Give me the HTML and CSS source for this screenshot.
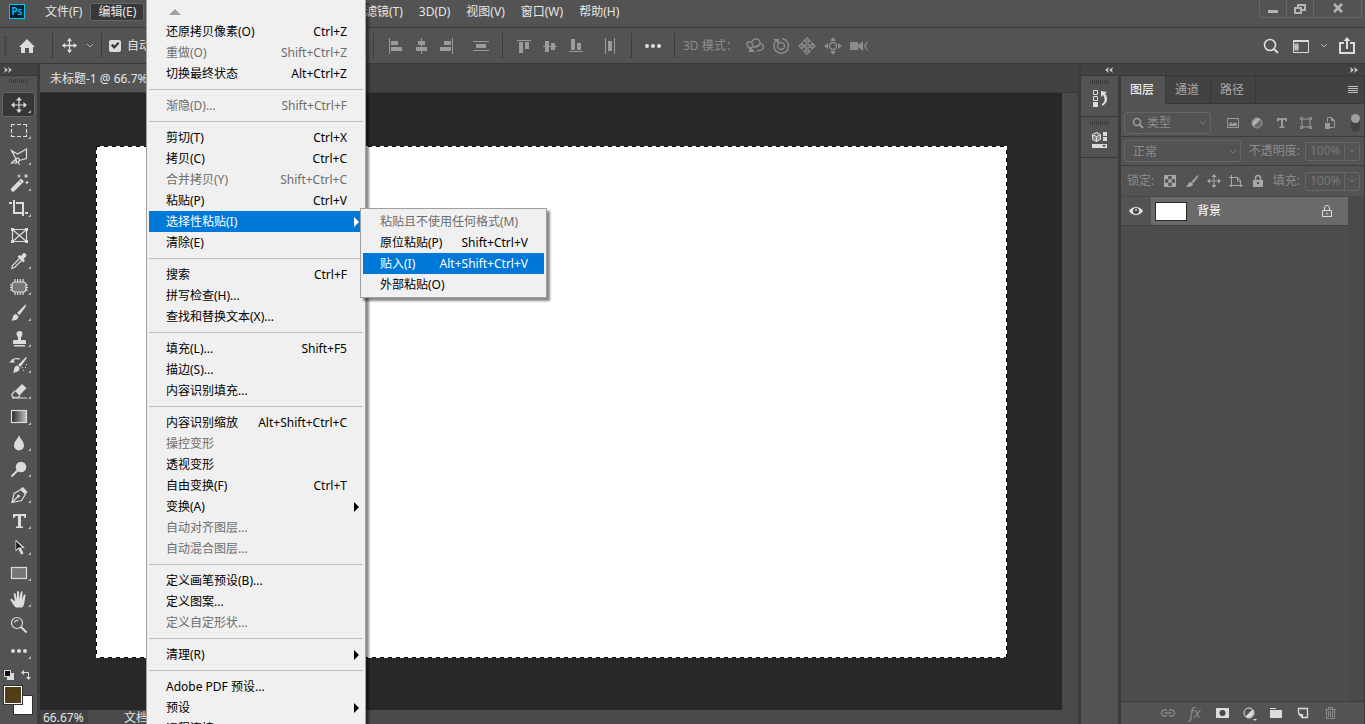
FILE: index.html
```html
<!DOCTYPE html>
<html lang="zh-CN">
<head>
    <meta charset="UTF-8">
    <meta name="viewport" content="width=device-width, initial-scale=1.0">
    <title>未标题-1 @ 66.7%</title>
    <link rel="stylesheet" href="styles.css">
</head>
<body>

    <header class="menubar">
        <div class="logo">Ps</div>
        <nav class="menus">
            <button>文件(F)</button>
            <button class="open">编辑(E)</button>
            <button>图像(I)</button>
            <button>图层(L)</button>
            <button>文字(Y)</button>
            <button>选择(S)</button>
            <button>滤镜(T)</button>
            <button>3D(D)</button>
            <button>视图(V)</button>
            <button>窗口(W)</button>
            <button>帮助(H)</button>
        </nav>
        <div class="window-buttons">
            <button aria-label="最小化"><svg width="12" height="12" viewBox="0 0 12 12"><path d="M1 7h10v3H1z" fill="#b4b4b4"/></svg></button>
            <button aria-label="还原"><svg width="14" height="12" viewBox="0 0 14 12" fill="none" stroke="#b4b4b4" stroke-width="2"><path d="M5 4V2h7v5H9"/><path d="M2 5h6v5H2z"/></svg></button>
            <button class="close" aria-label="关闭"><svg width="12" height="12" viewBox="0 0 12 12" stroke="#b4b4b4" stroke-width="2.500"><path d="M2 1l8 8M10 1L2 9"/></svg></button>
        </div>
    </header>

    <div class="options">
        <div class="options-start">
            <span class="grip-v"></span>
            <button class="home" aria-label="主页"><svg width="18" height="16" viewBox="0 0 18 16" fill="#dcdcdc"><path d="M9 1L1 9h2v6h4v-5h4v5h4V9h2z"/></svg></button>
            <span class="divider"></span>
            <button class="current-tool" aria-label="移动工具">
                <svg width="17" height="17" viewBox="0 0 20 20" stroke="#dcdcdc" stroke-width="1.500" fill="#dcdcdc"><path d="M10 3v14M3 10h14"/><path d="M10 1L7 5h6zM10 19l-3-4h6zM1 10l4-3v6zM19 10l-4-3v6z" stroke="none"/></svg>
                <svg width="8" height="6" viewBox="0 0 8 6" fill="none" stroke="#b0b0b0"><path d="M1 1l3 3 3-3"/></svg>
            </button>
            <span class="divider"></span>
            <input type="checkbox" id="autoSelect" checked>
            <label for="autoSelect">自动选择：</label>
        </div>
        <span class="divider"></span>
        <div class="group">
            <button aria-label="左对齐"><svg width="20" height="20" viewBox="0 0 20 20" fill="#9b9b9b"><path d="M4 2h1v16H4zM6 5h7v4H6zM6 11h11v4H6z"/></svg></button>
            <button aria-label="水平居中对齐"><svg width="20" height="20" viewBox="0 0 20 20" fill="#9b9b9b"><path d="M10 2h1v16h-1zM7 5h7v4H7zM5 11h11v4H5z"/></svg></button>
            <button aria-label="右对齐"><svg width="20" height="20" viewBox="0 0 20 20" fill="#9b9b9b"><path d="M15 2h1v16h-1zM7 5h7v4H7zM3 11h11v4H3z"/></svg></button>
        </div>
        <div class="group">
            <button aria-label="垂直分布"><svg width="20" height="20" viewBox="0 0 20 20" fill="#9b9b9b"><path d="M2 5h16v1H2zM5 8h10v4H5zM2 14h16v1H2z"/></svg></button>
        </div>
        <span class="divider"></span>
        <div class="group">
            <button aria-label="顶对齐"><svg width="20" height="20" viewBox="0 0 20 20" fill="#9b9b9b"><path d="M3 4h14v1H3zM5 6h4v11H5zM11 6h4v7h-4z"/></svg></button>
            <button aria-label="垂直居中对齐"><svg width="20" height="20" viewBox="0 0 20 20" fill="#9b9b9b"><path d="M3 10h14v1H3zM5 5h4v11H5zM11 7h4v7h-4z"/></svg></button>
            <button aria-label="底对齐"><svg width="20" height="20" viewBox="0 0 20 20" fill="#9b9b9b"><path d="M3 15h14v1H3zM5 3h4v11H5zM11 7h4v7h-4z"/></svg></button>
        </div>
        <div class="group">
            <button aria-label="水平分布"><svg width="20" height="20" viewBox="0 0 20 20" fill="#9b9b9b"><path d="M5 2h1v16H5zM8 5h4v10H8zM14 2h1v16h-1z"/></svg></button>
        </div>
        <span class="divider"></span>
        <div class="group">
            <button aria-label="更多"><svg width="20" height="20" viewBox="0 0 20 20" fill="#e0e0e0"><circle cx="4" cy="10" r="2"/><circle cx="10" cy="10" r="2"/><circle cx="16" cy="10" r="2"/></svg></button>
        </div>
        <span class="divider"></span>
        <div class="group">
            <span class="mode-label">3D 模式：</span>
            <button aria-label="环绕"><svg width="20" height="20" viewBox="0 0 20 20" fill="none" stroke="#8c8c8c" stroke-width="1.400"><circle cx="11" cy="7" r="4"/><path d="M7 6C3 5 1 7 2 9c1 3 4 4 6 5M5 11c3 2 6-1 9-2M15 7c5 3 5 7-3 8"/><path d="M3 16h7l-4-4z" fill="#8c8c8c" stroke="none"/></svg></button>
            <button aria-label="滚动"><svg width="20" height="20" viewBox="0 0 20 20" fill="none" stroke="#8c8c8c" stroke-width="1.400"><circle cx="10" cy="10" r="3.500"/><path d="M6 4a7.300 7.300 0 1 0 5-1.300"/><path d="M2 3h6v5z" fill="#8c8c8c" stroke="none"/></svg></button>
            <button aria-label="拖动"><svg width="20" height="20" viewBox="0 0 20 20" fill="none" stroke="#8c8c8c" stroke-width="1.300"><path d="M10 2L7 5h2v4H5V7l-3 3 3 3v-2h4v4H7l3 3 3-3h-2v-4h4v2l3-3-3-3v2h-4V5h2z"/></svg></button>
            <button aria-label="滑动"><svg width="20" height="20" viewBox="0 0 20 20" fill="none" stroke="#8c8c8c" stroke-width="1.400"><circle cx="10" cy="10" r="3.500"/><path d="M10 1L7 5h6zM10 19l-3-4h6zM1 10l4-3v6zM19 10l-4-3v6z" fill="#8c8c8c" stroke="none"/></svg></button>
            <button aria-label="缩放"><svg width="20" height="20" viewBox="0 0 20 20" fill="#8c8c8c"><path d="M1 6h8v8H1zM9 9l5-4v10l-5-4z"/><path d="M19 5l-4 5 4 5M17 7v6" fill="none" stroke="#8c8c8c"/></svg></button>
        </div>
        <div class="options-end">
            <button aria-label="搜索"><svg width="18" height="18" viewBox="0 0 18 18" fill="none" stroke="#dcdcdc" stroke-width="1.600"><circle cx="8" cy="8" r="5.500"/><path d="M12 12l4 4" stroke-width="2"/></svg></button>
            <button aria-label="工作区"><svg width="18" height="18" viewBox="0 0 18 18" fill="none" stroke="#dcdcdc"><path d="M1.500 3.500h15v12h-15z"/><path d="M1 4.500h16"/><path d="M3 7h3v2H3zM3 9h3v2H3zM3 11h3v2H3z"/></svg></button>
            <button class="small" aria-label="选择工作区"><svg width="8" height="6" viewBox="0 0 8 6" fill="none" stroke="#b0b0b0"><path d="M1 1l3 3 3-3"/></svg></button>
            <button aria-label="共享"><svg width="18" height="18" viewBox="0 0 18 18" fill="none" stroke="#dcdcdc" stroke-width="2"><path d="M6 6H2v10h14V6h-4"/><path d="M9 12V3"/><path d="M9 0L5.500 4h7z" fill="#dcdcdc" stroke="none"/></svg></button>
        </div>
    </div>

    <main class="app">
        <aside class="toolbar">
            <div class="strip"><svg width="8" height="6" viewBox="0 0 8 6" fill="#c8c8c8"><path d="M0 0l4 3-4 3 1-3zM4 0l4 3-4 3 1-3z"/></svg></div>
            <span class="grip-h"></span>
            <div class="tools">
                <button class="tool active more" aria-label="移动"><svg viewBox="0 0 20 20"><path class="s" d="M10 4v12M4 10h12"/><path d="M10 2L7 5.500h6zM10 18l-3-3.500h6zM2 10l3.500-3v6zM18 10l-3.500-3v6z"/></svg></button>
                <button class="tool more" aria-label="选框"><svg viewBox="0 0 20 20"><path class="s" d="M2.500 6V3.500H6M8 3.500h4M14 3.500h3.500V6M17.500 8v4M17.500 13.500v2H14M12 15.500H8M6 15.500H2.500v-2M2.500 12V8"/></svg></button>
                <button class="tool more" aria-label="套索"><svg viewBox="0 0 20 20"><path class="s" d="M7 12L2.500 3.500l6 3.500 9-5v9.500L10 13.500M7 12l-4.500 4h5z"/><circle class="s" cx="8.500" cy="13" r="1.800"/><path class="s" d="M9 15l1.500 3"/></svg></button>
                <button class="tool more" aria-label="魔棒"><svg viewBox="0 0 20 20"><path d="M12 5.500l3 3L5.500 18a2.100 2.100 0 0 1-3-3z"/><path d="M10.500 8l1.800 1.500" stroke="#535353"/><path d="M10 1.500v3M8.500 3h3M17 1v4M15 3h4M18 8v3M16.500 9.500h3" class="s"/></svg></button>
                <button class="tool more" aria-label="裁剪"><svg viewBox="0 0 20 20"><path class="s w" d="M0 4h3M5 1v13h8M7 4h7v13M16 14h3"/></svg></button>
                <button class="tool" aria-label="图框"><svg viewBox="0 0 20 20"><path class="s" d="M3.500 4.500h14v12h-14zM3.500 4.500l14 12M17.500 4.500l-14 12"/><path d="M2 3h3v3H2zM16 3h3v3h-3zM2 15h3v3H2zM16 15h3v3h-3z"/></svg></button>
                <button class="tool more" aria-label="吸管"><svg viewBox="0 0 20 20"><path d="M8.500 5.500l2-1.500 1.500 1 2-2.500c1.500-1.500 4.500 1 3 3L14.500 8l1.500 1.500-1.800 2z"/><path class="s" d="M11 7l-7.500 7.500-.8 2.800 2.800-.8L13 9"/></svg></button>
                <button class="tool more" aria-label="修补"><svg viewBox="0 0 20 20"><rect x="3" y="5" width="14" height="10" rx="3" fill="#777" class="s"/><path class="s" d="M6 2v3M8.700 2v3M11.300 2v3M14 2v3M6 15v3M8.700 15v3M11.300 15v3M14 15v3M1 8h2M1 10.500h2M1 13h2M17 8h2M17 10.500h2M17 13h2"/></svg></button>
                <button class="tool more" aria-label="画笔"><svg viewBox="0 0 20 20"><path d="M16.500 1.500c1 0 .8 1-.2 2.700L10.500 12 8 10zM7 11l2.500 2.200c0 3-3 4.500-7.500 4.300 1.800-1 1.500-2.500 2-4 .5-1.600 1.700-2.300 3-2.500z"/></svg></button>
                <button class="tool more" aria-label="仿制图章"><svg viewBox="0 0 20 20"><path d="M10.500 2a3 3 0 0 1 3 3c0 1.600-1.500 2.500-1.500 4v2h4c1 0 1 1 1 3v1H4v-1c0-2 0-3 1-3h4V9c0-1.500-1.500-2.400-1.500-4a3 3 0 0 1 3-3zM5 16h11v1.500H5z"/></svg></button>
                <button class="tool more" aria-label="历史记录画笔"><svg viewBox="0 0 20 20"><path d="M17 2c1 0 .8 1-.2 2.500L11.500 12 9 10zM8.200 10.500l2.500 2.200c0 3-2.500 5-7 4.800 1.500-1 1-2.500 1.500-4 .5-1.700 1.700-2.700 3-3zM0 7.500L4 4l2 3.500z"/><path class="s" d="M3 5c3-2.500 6-1 8-1"/><path d="M17 9h1v1h-1zM16 12h1v1h-1zM14 15h1v1h-1zM13 12h1v1h-1z"/></svg></button>
                <button class="tool more" aria-label="橡皮擦"><svg viewBox="0 0 20 20"><path d="M13 3l4.500 4-7 7.500L6 10z"/><path class="s" d="M6 10l-3 3c-.8 1 .5 2.500 1.500 3.500H9l2-2M3 17h15"/></svg></button>
                <button class="tool more" aria-label="渐变"><svg viewBox="0 0 20 20"><defs><linearGradient id="grad"><stop offset="0" stop-color="#282828"/><stop offset="1" stop-color="#c4c4c4"/></linearGradient></defs><rect x="2.500" y="3.500" width="15" height="12" fill="url(#grad)" class="s"/></svg></button>
                <button class="tool more" aria-label="模糊"><svg viewBox="0 0 20 20"><path d="M10 2c1 4 5 6 5 10.500a5 5 0 0 1-10 0C5 8 9 6 10 2z"/></svg></button>
                <button class="tool more" aria-label="减淡"><svg viewBox="0 0 20 20"><circle cx="12" cy="8" r="5.300"/><path d="M9 11l-6.500 6.500" class="s w"/></svg></button>
                <button class="tool more" aria-label="钢笔"><svg viewBox="0 0 20 20"><path class="s" d="M3 17.500l2-9 7-4 4.500 4.500-4 6.500zM3 17.500l6-6"/><circle cx="9.500" cy="11" r="1.500"/><path d="M11.500 3.500L14 2l4.500 5-2 2.500z"/></svg></button>
                <button class="tool more" aria-label="文字"><svg viewBox="0 0 20 20"><path d="M4 3h13v4h-1.500c-.2-1.500-.7-2-2.500-2h-1v10.500h2V17H7v-1.500h2V5H8c-1.800 0-2.300.5-2.500 2H4z"/></svg></button>
                <button class="tool more" aria-label="路径选择"><svg viewBox="0 0 20 20"><path d="M6.500 2.500v12l3-2.500 2.500 5.500 2.500-1L12 11h4z"/><path d="M7.200 4.500v8l2.500-2h3.500z" fill="#111"/></svg></button>
                <button class="tool more" aria-label="矩形"><svg viewBox="0 0 20 20"><rect x="2.500" y="4.500" width="15" height="11" fill="#757575" class="s"/></svg></button>
                <button class="tool more" aria-label="抓手"><svg viewBox="0 0 20 20"><path d="M7 18.500c-2-1-4-5-5.500-7.500-.3-1.300 1-1.500 2-.6L6 12.500 4.700 5c0-1.200 1.500-1.400 1.900 0l1.200 5.300L8 3c.1-1.300 1.900-1.300 2 0l.3 7.200L11.700 3c.3-1.200 1.900-1 1.800.3L13 10.700l1.800-4.800c.5-1 1.900-.6 1.700.6L15.300 14c-.4 2.600-1 3.500-2.300 4.500z"/></svg></button>
                <button class="tool" aria-label="缩放"><svg viewBox="0 0 20 20"><circle class="s" cx="8" cy="8" r="5.500"/><path class="s" d="M5.500 7.500a3 3 0 0 1 4-2"/><path class="s w" d="M12 12l5.500 5.500"/></svg></button>
                <button class="tool more" aria-label="编辑工具栏"><svg viewBox="0 0 20 20"><circle cx="4" cy="10" r="2"/><circle cx="10" cy="10" r="2"/><circle cx="16" cy="10" r="2"/></svg></button>
            </div>
            <div class="color-buttons">
                <button aria-label="默认颜色"><svg width="12" height="12" viewBox="0 0 12 12"><path d="M4 4h7v7H4z" fill="#dcdcdc"/><path d="M1.500 1.500h6v6h-6z" fill="#111" stroke="#dcdcdc"/></svg></button>
                <button aria-label="切换颜色"><svg width="12" height="12" viewBox="0 0 12 12" fill="#dcdcdc"><path d="M3 3.500h5.500V9" fill="none" stroke="#dcdcdc"/><path d="M1 3.500L4 1v5zM8.500 11L6 8h5z"/></svg></button>
            </div>
            <div class="swatches">
                <button class="swatch back" aria-label="背景色"></button>
                <button class="swatch front" aria-label="前景色"></button>
            </div>
        </aside>

        <section class="document">
            <div class="tabs"><button class="doc-tab">未标题-1 @ 66.7%</button></div>
            <div class="workspace">
                <div class="canvas"><div class="page"></div></div>
                <div class="scrollbar"></div>
            </div>
            <div class="status">
                <span class="zoom-level">66.67%</span>
                <span class="doc-info">文档</span>
            </div>
        </section>

        <div class="side">
            <div class="strip side-strip">
                <svg width="8" height="6" viewBox="0 0 8 6" fill="#c8c8c8"><path d="M4 0L0 3l4 3-1-3zM8 0L4 3l4 3-1-3z"/></svg>
                <svg width="8" height="6" viewBox="0 0 8 6" fill="#c8c8c8"><path d="M0 0l4 3-4 3 1-3zM4 0l4 3-4 3 1-3z"/></svg>
            </div>
            <div class="side-body">
                <div class="dock">
                    <div class="dock-cell">
                        <span class="grip-h"></span>
                        <button aria-label="历史记录"><svg width="20" height="20" viewBox="0 0 20 20"><path d="M3.500 1.500h4v4h-4zM3.500 7.500h4v4h-4z" fill="none" stroke="#dcdcdc"/><path d="M3 13h5v5H3zM11 2l6 1-2 1.500c4 5 2 10-3 12.500v-2c3-2 3.500-5 1-9L11 8z" fill="#dcdcdc"/></svg></button>
                    </div>
                    <div class="dock-cell">
                        <span class="grip-h"></span>
                        <button aria-label="属性"><svg width="20" height="20" viewBox="0 0 20 20"><path d="M6.500 2.500l4 2v5l-4 2-4-2v-5zM2.500 4.500l4 2 4-2M6.500 6.500v5" fill="#8c8c8c" stroke="#dcdcdc"/><path d="M13 2h4v4h-4zM13 7h4v4h-4zM2 14h15v4H2z" fill="#dcdcdc"/><path d="M12 15h4l-2 2z" fill="#444"/></svg></button>
                    </div>
                </div>

                <div class="panel">
                    <div class="panel-tabs">
                        <button class="active">图层</button>
                        <button>通道</button>
                        <button>路径</button>
                        <button class="panel-menu" aria-label="面板菜单"><svg width="10" height="8" viewBox="0 0 10 8" fill="#c0c0c0"><path d="M0 0h10v1H0zM0 2h10v1H0zM0 4h10v1H0zM0 6h10v1H0z"/></svg></button>
                    </div>

                    <div class="filter-row">
                        <div class="field type-filter">
                            <svg width="12" height="12" viewBox="0 0 12 12" fill="none" stroke="#9b9b9b" stroke-width="1.500"><circle cx="5" cy="5" r="3.500"/><path d="M7.500 7.500L11 11" stroke-width="2"/></svg>
                            <select aria-label="类型"><option>类型</option></select>
                            <svg width="8" height="6" viewBox="0 0 8 6" fill="none" stroke="#777"><path d="M1 1l3 3 3-3"/></svg>
                        </div>
                        <div class="filters">
                            <button aria-label="像素"><svg width="14" height="14" viewBox="0 0 14 14"><path d="M1.500 2.500h11v9h-11z" fill="none" stroke="#9b9b9b"/><path d="M3 10V8l2-2 1.500 2L9 6l2 2v2z" fill="#9b9b9b"/></svg></button>
                            <button aria-label="调整"><svg width="14" height="14" viewBox="0 0 14 14"><circle cx="7" cy="7" r="5" fill="#6a6a6a" stroke="#9b9b9b"/><path d="M10.500 3.500a5 5 0 0 0-7 7z" fill="#b0b0b0"/></svg></button>
                            <button aria-label="文字图层"><svg width="14" height="14" viewBox="0 0 14 14"><path d="M2 2h10v3.500h-1.500C10.500 4 10 4 8 4v6.500h1.500V12h-5v-1.500H6V4C4 4 3.500 4 3.500 5.500H2z" fill="#9b9b9b"/></svg></button>
                            <button aria-label="形状"><svg width="14" height="14" viewBox="0 0 14 14" fill="none" stroke="#9b9b9b"><path d="M3 3h8v8H3z"/><path d="M1.500 1.500h2v2h-2zM10.500 1.500h2v2h-2zM1.500 10.500h2v2h-2zM10.500 10.500h2v2h-2z"/></svg></button>
                            <button aria-label="智能对象"><svg width="14" height="14" viewBox="0 0 14 14"><path d="M4.500 6V1.500h4l3 3v7H7" fill="none" stroke="#9b9b9b"/><path d="M8 1v4h4zM2 7h5v6H2z" fill="#9b9b9b"/></svg></button>
                        </div>
                        <button class="toggle" aria-label="打开或关闭图层过滤"></button>
                    </div>

                    <div class="blend-row">
                        <div class="field blend">
                            <select aria-label="混合模式"><option>正常</option></select>
                            <svg width="8" height="6" viewBox="0 0 8 6" fill="none" stroke="#777"><path d="M1 1l3 3 3-3"/></svg>
                        </div>
                        <label for="opacity">不透明度:</label>
                        <div class="field percent">
                            <input type="text" id="opacity" value="100%">
                            <button aria-label="不透明度滑块"><svg width="8" height="6" viewBox="0 0 8 6" fill="none" stroke="#777"><path d="M1 1l3 3 3-3"/></svg></button>
                        </div>
                    </div>

                    <div class="lock-row">
                        <span class="lock-label">锁定:</span>
                        <div class="locks">
                            <button aria-label="锁定透明像素"><svg width="14" height="14" viewBox="0 0 14 14"><path d="M1.500 1.500h11v11h-11z" fill="none" stroke="#a8a8a8"/><path d="M2 2h3.300v3.300H2zM8.700 2H12v3.300H8.700zM5.300 5.300h3.400v3.400H5.300zM2 8.700h3.300V12H2zM8.700 8.700H12V12H8.700z" fill="#a8a8a8"/></svg></button>
                            <button aria-label="锁定图像像素"><svg width="14" height="14" viewBox="0 0 14 14" fill="#a8a8a8"><path d="M13 1c.8.500 0 1.500-.5 2.500L8.500 9l-2-1.500zM6 8l2 1.700C8 12 5.500 13.300 1 13c1.500-.8 1.500-2 2-3 .6-1.300 1.800-2 3-2z"/></svg></button>
                            <button aria-label="锁定位置"><svg width="14" height="14" viewBox="0 0 14 14" fill="#a8a8a8"><path d="M7 1v12M1 7h12" stroke="#a8a8a8"/><path d="M7 0L4.500 3h5zM7 14l-2.500-3h5zM0 7l3-2.500v5zM14 7l-3-2.500v5z"/></svg></button>
                            <button aria-label="锁定画板"><svg width="14" height="14" viewBox="0 0 14 14" fill="none" stroke="#a8a8a8"><path d="M2.500 1v12M0 3.500h9l2.500 3V13M0 11.500h14M8.500 3v4h3"/></svg></button>
                            <button aria-label="全部锁定"><svg width="14" height="14" viewBox="0 0 14 14"><path d="M4.500 7V4a2.500 2.500 0 0 1 5 0v3" fill="none" stroke="#a8a8a8" stroke-width="1.500"/><path d="M2 6h10v7H2z" fill="#a8a8a8"/><path d="M6 8h2v2H6z" fill="#535353"/></svg></button>
                        </div>
                        <label for="fill">填充:</label>
                        <div class="field percent">
                            <input type="text" id="fill" value="100%">
                            <button aria-label="填充滑块"><svg width="8" height="6" viewBox="0 0 8 6" fill="none" stroke="#777"><path d="M1 1l3 3 3-3"/></svg></button>
                        </div>
                    </div>

                    <div class="layers">
                        <div class="layer">
                            <button class="eye" aria-label="可见性"><svg width="14" height="10" viewBox="0 0 14 10"><path d="M0 5c3-5.500 11-5.500 14 0-3 5.500-11 5.500-14 0z" fill="#dcdcdc"/><circle cx="7" cy="5" r="3" fill="#444"/><circle cx="7" cy="4" r="1" fill="#dcdcdc"/></svg></button>
                            <div class="layer-main">
                                <span class="thumb"></span>
                                <span class="layer-name">背景</span>
                                <svg width="12" height="14" viewBox="0 0 12 14" fill="none" stroke="#dcdcdc"><path d="M1.500 6.500h9v6h-9zM3.500 6V4c0-3.500 5-3.500 5 0v2"/><path d="M6 8.500v2"/></svg>
                            </div>
                        </div>
                    </div>

                    <div class="panel-footer">
                        <button aria-label="链接图层"><svg width="16" height="16" viewBox="0 0 16 16" fill="none" stroke="#8c8c8c" stroke-width="1.300"><path d="M7 6C6 4.500 2 4 1.500 8 2 12 6 11.500 7 10M9 6c1-1.500 5-2 5.500 2-.5 4-4.500 3.500-5.500 2M4.500 8h7"/></svg></button>
                        <button class="fx" aria-label="图层样式">fx</button>
                        <button aria-label="图层蒙版"><svg width="16" height="16" viewBox="0 0 16 16"><path d="M2 3h13v10H2z" fill="#dcdcdc"/><circle cx="8.500" cy="8" r="3" fill="#484848"/></svg></button>
                        <button aria-label="调整图层"><svg width="16" height="16" viewBox="0 0 16 16"><circle cx="8" cy="8" r="5" fill="#535353" stroke="#dcdcdc"/><path d="M11.500 4.500l-7 7a5 5 0 0 0 7-7zM12 14h4l-2 2z" fill="#dcdcdc"/></svg></button>
                        <button aria-label="新建组"><svg width="16" height="16" viewBox="0 0 16 16" fill="#dcdcdc"><path d="M2 3h6v1H2zM2 5h12v8H2z"/></svg></button>
                        <button aria-label="新建图层"><svg width="16" height="16" viewBox="0 0 16 16"><path d="M3.500 8V3.500h9v9H8z" fill="none" stroke="#dcdcdc" stroke-width="1.300"/><path d="M3 9h5v5z" fill="#dcdcdc"/></svg></button>
                        <button aria-label="删除图层"><svg width="16" height="16" viewBox="0 0 16 16" fill="none" stroke="#8c8c8c"><path d="M3 4.500h11M6.500 4V2.500h4V4M4.500 5v8.500h8V5M6.500 6v6M8.500 6v6M10.500 6v6"/></svg></button>
                    </div>
                </div>
            </div>
        </div>
    </main>

    <!-- Edit menu -->
    <div class="menu edit-menu">
        <div class="scroll-up"><svg width="12" height="6" viewBox="0 0 12 6" fill="#a0a0a0"><path d="M6 0l6 6H0z"/></svg></div>
        <button>还原拷贝像素(O)<kbd>Ctrl+Z</kbd></button>
        <button disabled>重做(O)<kbd>Shift+Ctrl+Z</kbd></button>
        <button>切换最终状态<kbd>Alt+Ctrl+Z</kbd></button>
        <hr>
        <button disabled>渐隐(D)...<kbd>Shift+Ctrl+F</kbd></button>
        <hr>
        <button>剪切(T)<kbd>Ctrl+X</kbd></button>
        <button>拷贝(C)<kbd>Ctrl+C</kbd></button>
        <button disabled>合并拷贝(Y)<kbd>Shift+Ctrl+C</kbd></button>
        <button>粘贴(P)<kbd>Ctrl+V</kbd></button>
        <div class="has-submenu">
            <button class="parent selected">选择性粘贴(I)</button>
            <div class="menu submenu">
                <button disabled>粘贴且不使用任何格式(M)</button>
                <button>原位粘贴(P)<kbd>Shift+Ctrl+V</kbd></button>
                <button class="selected">贴入(I)<kbd>Alt+Shift+Ctrl+V</kbd></button>
                <button>外部粘贴(O)</button>
            </div>
        </div>
        <button>清除(E)</button>
        <hr>
        <button>搜索<kbd>Ctrl+F</kbd></button>
        <button>拼写检查(H)...</button>
        <button>查找和替换文本(X)...</button>
        <hr>
        <button>填充(L)...<kbd>Shift+F5</kbd></button>
        <button>描边(S)...</button>
        <button>内容识别填充...</button>
        <hr>
        <button>内容识别缩放<kbd>Alt+Shift+Ctrl+C</kbd></button>
        <button disabled>操控变形</button>
        <button>透视变形</button>
        <button>自由变换(F)<kbd>Ctrl+T</kbd></button>
        <button class="parent">变换(A)</button>
        <button disabled>自动对齐图层...</button>
        <button disabled>自动混合图层...</button>
        <hr>
        <button>定义画笔预设(B)...</button>
        <button>定义图案...</button>
        <button disabled>定义自定形状...</button>
        <hr>
        <button class="parent">清理(R)</button>
        <hr>
        <button>Adobe PDF 预设...</button>
        <button class="parent">预设</button>
        <button>远程连接...</button>
    </div>

</body>
</html>
```
FILE: styles.css
```css
* {
    box-sizing: border-box;
}
body {
    margin: 0;
    height: 100vh;
    display: flex;
    flex-direction: column;
    overflow: hidden;
    position: relative;
    background-color: #535353;
    color: #e6e6e6;
    font-family: "Noto Sans", "Noto Sans CJK SC", sans-serif;
    font-size: 12px;
    line-height: 18px;
}
button, input, select {
    font: inherit;
    color: inherit;
    margin: 0;
    padding: 0;
    border: none;
    background: none;
    white-space: nowrap;
}
button {
    display: flex;
    align-items: center;
    justify-content: center;
}
svg {
    display: block;
    flex: none;
}

/* Menu bar */
.menubar {
    display: flex;
    flex: none;
    height: 28px;
    border-bottom: 1px solid #383838;
}
.logo {
    width: 16px;
    height: 15px;
    margin: 4px 12px 0 9px;
    border: 1px solid #00c8ff;
    background-color: #001e26;
    color: #00c8ff;
    font-size: 10px;
    font-weight: 600;
    line-height: 13px;
    text-align: center;
}
.menus {
    display: flex;
    align-items: flex-start;
    padding-top: 3px;
}
.menus button {
    height: 18px;
    padding: 0 7px;
    border: 1px solid transparent;
    border-radius: 3px;
}
.menus .open {
    background-color: #383838;
    border-color: #666;
}
.window-buttons {
    display: flex;
    height: 18px;
    margin: 0 3px 0 auto;
    border: 1px solid #666;
    border-top: none;
    border-radius: 0 0 3px 3px;
}
.window-buttons button {
    width: 27px;
    border-right: 1px solid #666;
}
.window-buttons .close {
    width: 47px;
    border-right: none;
}

/* Options bar */
.options {
    display: flex;
    flex: none;
    align-items: center;
    gap: 8px;
    height: 36px;
    border-bottom: 1px solid #383838;
}
.options-start {
    display: flex;
    align-items: center;
    gap: 8px;
    width: 365px;
    padding-left: 4px;
}
.grip-v {
    width: 3px;
    height: 20px;
    background: repeating-linear-gradient(#3c3c3c 0 1px, transparent 1px 2px);
}
.home {
    width: 24px;
    margin-right: 5px;
}
.divider {
    flex: none;
    width: 1px;
    height: 25px;
    background-color: #3c3c3c;
}
.current-tool {
    gap: 8px;
    width: 32px;
}
input[type="checkbox"] {
    appearance: none;
    width: 12px;
    height: 12px;
    margin: 0 -2px 0 -1px;
    border-radius: 2px;
    background-color: #dcdcdc;
}
input[type="checkbox"]::before {
    content: "";
    display: block;
    width: 12px;
    height: 12px;
    background-color: #333;
    clip-path: polygon(16% 50%, 30% 36%, 44% 52%, 74% 20%, 86% 34%, 44% 80%);
}
.group {
    display: flex;
    align-items: center;
}
.group button {
    width: 26px;
    height: 26px;
}
.mode-label {
    width: 59px;
    color: #8c8c8c;
}
.options-end {
    display: flex;
    align-items: center;
    gap: 12px;
    margin: 0 9px 0 auto;
}
.options-end .small {
    margin: 0 -2px;
}

/* Tools */
.app {
    display: flex;
    flex: 1;
    min-height: 0;
}
.strip {
    display: flex;
    flex: none;
    align-items: center;
    height: 12px;
    padding-left: 4px;
    background-color: #424242;
    border-bottom: 1px solid #383838;
}
.toolbar {
    display: flex;
    flex: none;
    flex-direction: column;
    width: 40px;
    border-right: 3px solid #3c3c3c;
}
.grip-h {
    display: block;
    width: 19px;
    height: 4px;
    margin: 3px auto 0;
    background: repeating-linear-gradient(90deg, #3c3c3c 0 1px, transparent 1px 2px);
}
.tools {
    display: flex;
    flex-direction: column;
    align-items: center;
    gap: 1px;
    padding-top: 9px;
}
.tool {
    position: relative;
    width: 33px;
    height: 25px;
    border: 1px solid transparent;
    border-radius: 3px;
}
.tool.active {
    background-color: #363636;
    border-color: #666;
}
.tool svg {
    width: 20px;
    height: 20px;
    fill: #dcdcdc;
}
.tool .s {
    stroke: #dcdcdc;
    stroke-width: 1.2;
}
.tool path.s, .tool circle.s {
    fill: none;
}
.tool .s.w {
    stroke-width: 2;
}
.tool.more::after {
    content: "";
    position: absolute;
    right: 3px;
    bottom: 3px;
    border-left: 3px solid transparent;
    border-bottom: 3px solid #b4b4b4;
}
.color-buttons {
    display: flex;
    gap: 5px;
    padding: 6px 0 0 3px;
}
.swatches {
    display: grid;
    grid-template-columns: 10px 10px 10px;
    grid-template-rows: 10px 10px 10px;
    padding: 4px 0 0 3px;
}
.swatch {
    border: 1px solid #303030;
    background-color: #fff;
}
.swatch.back {
    grid-area: 2 / 2 / 4 / 4;
}
.swatch.front {
    grid-area: 1 / 1 / 3 / 3;
    background-color: #543e1a;
    box-shadow: inset 0 0 0 1px #fff;
}

/* Document */
.document {
    display: flex;
    flex: 1;
    flex-direction: column;
    min-width: 0;
}
.tabs {
    display: flex;
    flex: none;
    height: 29px;
    background-color: #424242;
    border-bottom: 1px solid #383838;
}
.doc-tab {
    padding: 1px 10px 0;
    background-color: #535353;
}
.workspace {
    display: flex;
    flex: 1;
    min-height: 0;
}
.canvas {
    flex: 1;
    padding: 53px 55px 52px 56px;
    background-color: #282828;
}
/* selection edge */
.page {
    height: 100%;
    background-color: #fff;
    background-image:
        repeating-linear-gradient(90deg, #000 0 4px, #fff 4px 8px),
        repeating-linear-gradient(90deg, #fff 0 4px, #000 4px 8px),
        repeating-linear-gradient(#000 0 4px, #fff 4px 8px),
        repeating-linear-gradient(#fff 0 4px, #000 4px 8px);
    background-size: 100% 1px, 100% 1px, 1px 100%, 1px 100%;
    background-position: top, bottom, left, right;
    background-repeat: no-repeat;
}
.scrollbar {
    width: 16px;
    background-color: #4a4a4a;
}
.status {
    display: flex;
    flex: none;
    height: 14px;
    background-color: #4a4a4a;
    line-height: 16px;
}
.zoom-level {
    width: 48px;
    padding-left: 3px;
    background-color: #424242;
}
.doc-info {
    padding-left: 36px;
}

/* Right side */
.side {
    display: flex;
    flex: none;
    flex-direction: column;
    width: 287px;
    border-left: 3px solid #3c3c3c;
}
.side-strip {
    justify-content: space-between;
    padding: 0 7px 0 24px;
}
.side-body {
    display: flex;
    flex: 1;
    min-height: 0;
}
.dock {
    width: 40px;
    border-right: 3px solid #3c3c3c;
}
.dock-cell {
    height: 41px;
    padding-top: 1px;
    border-bottom: 1px solid #383838;
}
.dock-cell button {
    width: 100%;
    height: 30px;
}
.panel {
    display: flex;
    flex: 1;
    flex-direction: column;
    min-width: 0;
    border-right: 1px solid #383838;
}
.panel-tabs {
    display: flex;
    height: 28px;
    background-color: #424242;
    color: #a8a8a8;
}
.panel-tabs button {
    width: 45px;
    padding-right: 2px;
    border-right: 1px solid #383838;
    border-bottom: 1px solid #383838;
}
.panel-tabs .active {
    background-color: #535353;
    border-bottom-color: #535353;
    color: #fff;
}
.panel-tabs .panel-menu {
    flex: 1;
    justify-content: flex-end;
    padding-right: 6px;
    border-right: none;
}
.field {
    display: flex;
    align-items: center;
    height: 22px;
    border: 1px solid #666;
    border-radius: 3px;
    color: #8c8c8c;
}
.field select {
    appearance: none;
    flex: 1;
    min-width: 0;
    outline: none;
}
.filter-row, .blend-row, .lock-row {
    display: flex;
    align-items: center;
    padding: 0 4px 0 3px;
    border-bottom: 1px solid #3c3c3c;
    color: #8c8c8c;
}
.filter-row {
    height: 33px;
    padding-top: 6px;
}
.type-filter {
    width: 87px;
    padding: 0 3px 0 7px;
    gap: 3px;
}
.filters {
    display: flex;
    flex: 1;
    justify-content: space-between;
    padding: 0 14px 0 15px;
}
.toggle {
    align-items: flex-start;
    width: 9px;
    height: 18px;
    border-radius: 5px;
    background-color: #424242;
}
.toggle::before {
    content: "";
    width: 9px;
    height: 9px;
    border-radius: 5px;
    background-color: #a0a0a0;
}
.blend-row {
    height: 29px;
}
.blend {
    width: 117px;
    padding: 2px 3px 0 8px;
}
.blend-row label, .lock-row label {
    margin-left: auto;
    padding-right: 5px;
}
.percent {
    width: 55px;
    height: 19px;
    color: #777;
}
.percent input {
    flex: 1;
    min-width: 0;
    width: 0;
    padding-left: 4px;
}
.percent button {
    width: 15px;
    height: 100%;
    border-left: 1px solid #666;
}
.lock-row {
    height: 30px;
    border-bottom: none;
}
.lock-label {
    width: 39px;
    padding-left: 3px;
}
.locks {
    display: flex;
    gap: 8px;
}
.layers {
    flex: 1;
    border-top: 1px solid #484848;
    border-right: 16px solid #4a4a4a;
    background-color: #4d4d4d;
}
.layer {
    display: flex;
    height: 29px;
    background-color: #535353;
    border-bottom: 1px solid #424242;
}
.eye {
    width: 30px;
}
.layer-main {
    display: flex;
    flex: 1;
    align-items: center;
    padding: 0 15px 0 4px;
    background-color: #6a6a6a;
    color: #fff;
}
.thumb {
    width: 32px;
    height: 19px;
    border: 1px solid #282828;
    background-color: #fff;
}
.layer-name {
    flex: 1;
    padding-left: 10px;
}
.panel-footer {
    display: flex;
    justify-content: flex-end;
    gap: 11px;
    height: 23px;
    padding-right: 26px;
    border-top: 1px solid #3c3c3c;
}
.panel-footer button {
    width: 16px;
}
.panel-footer .fx {
    color: #8c8c8c;
    font-size: 14px;
    font-style: italic;
}

/* Drop-down menus */
.menu {
    position: absolute;
    padding: 2px;
    border: 1px solid #a0a0a0;
    background-color: #f0f0f0;
    color: #000;
    box-shadow: 3px 3px 2px rgba(0, 0, 0, 0.45);
}
.menu button {
    width: 100%;
    height: 21px;
    padding: 0 16px 0 17px;
    justify-content: space-between;
}
.menu button:disabled {
    color: #6d6d6d;
}
.menu .selected {
    background-color: #0078d7;
    color: #fff;
}
.menu kbd {
    font: inherit;
}
.menu .parent {
    padding-right: 4px;
}
.menu .parent::after {
    content: "";
    border: 5px solid transparent;
    border-left-color: currentColor;
    border-right: none;
}
.menu hr {
    height: 1px;
    margin: 5px 0;
    border: none;
    background-color: #bfbfbf;
}
.edit-menu {
    top: 0;
    left: 146px;
    width: 220px;
    padding-top: 0;
    border-top: none;
}
.scroll-up {
    height: 21px;
    padding: 9px 0 0 20px;
}
.has-submenu {
    position: relative;
}
.submenu {
    top: -3px;
    left: 211px;
    width: 187px;
}
```
